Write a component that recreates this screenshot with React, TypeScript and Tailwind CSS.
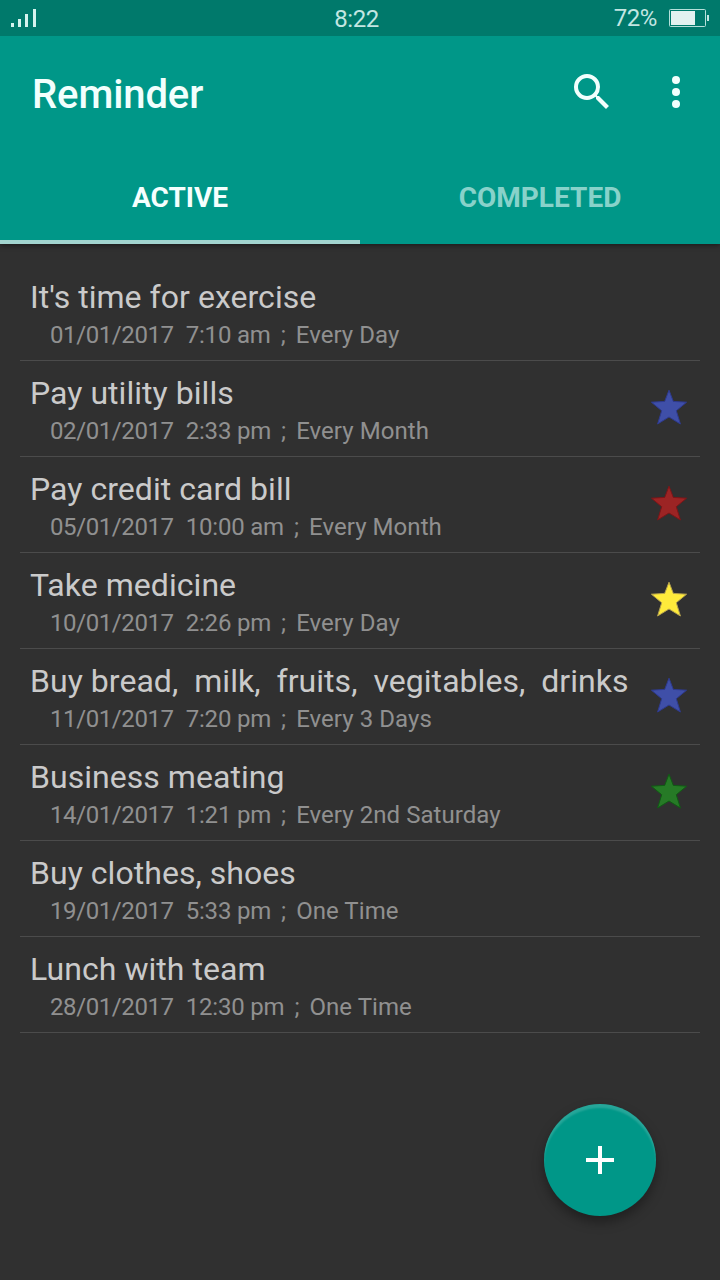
import React from 'react';

type Reminder = {
  title: string;
  date: string;
  time: string;
  repeat: string;
  star?: string;
};

const reminders: Reminder[] = [
  { title: "It's time for exercise", date: '01/01/2017', time: '7:10 am', repeat: 'Every Day' },
  { title: 'Pay utility bills', date: '02/01/2017', time: '2:33 pm', repeat: 'Every Month', star: 'fill-[#3f4fa8] stroke-[#2e3a90]' },
  { title: 'Pay credit card bill', date: '05/01/2017', time: '10:00 am', repeat: 'Every Month', star: 'fill-[#9c2424] stroke-[#7d1518]' },
  { title: 'Take medicine', date: '10/01/2017', time: '2:26 pm', repeat: 'Every Day', star: 'fill-[#ffeb3b] stroke-[#b5a24e]' },
  { title: 'Buy bread,  milk,  fruits,  vegitables,  drinks', date: '11/01/2017', time: '7:20 pm', repeat: 'Every 3 Days', star: 'fill-[#3f4fa8] stroke-[#2e3a90]' },
  { title: 'Business meating', date: '14/01/2017', time: '1:21 pm', repeat: 'Every 2nd Saturday', star: 'fill-[#267a26] stroke-[#105c14]' },
  { title: 'Buy clothes, shoes', date: '19/01/2017', time: '5:33 pm', repeat: 'One Time' },
  { title: 'Lunch with team', date: '28/01/2017', time: '12:30 pm', repeat: 'One Time' },
];

const StatusBar: React.FC = () => (
  <div className="grid h-9 grid-cols-3 items-center bg-[#00796b] text-2xl tracking-[-0.4px] text-[#c3e6e2]">
    <svg width="26" height="18" viewBox="0 0 26 18" className="ml-[11px] fill-[#d5f3ee]">
      <rect x="0" y="14" width="3" height="4" />
      <rect x="7" y="10" width="3" height="8" />
      <rect x="14" y="5" width="3" height="13" />
      <rect x="22" y="0" width="3" height="18" />
    </svg>
    <span className="pr-[7px] pt-[2px] text-center leading-8">8:22</span>
    <div className="flex items-center justify-end pr-[11px]">
      <span className="leading-8">72%</span>
      <svg width="40" height="18" viewBox="0 0 40 18" className="ml-3">
        <rect x="0.5" y="0.5" width="36" height="17" rx="1" className="fill-none stroke-[#b5e0da]" />
        <rect x="2" y="2" width="24" height="14" className="fill-[#e3f2f0]" />
        <rect x="38" y="6" width="2" height="6" className="fill-[#c3e6e2]" />
      </svg>
    </div>
  </div>
);

const StarIcon: React.FC<{ className: string }> = ({ className }) => (
  <svg width="36" height="36" viewBox="0 0 36 36" className={className} strokeWidth="1">
    <path d="M18 1.2L22.3 12.4L35.6 13.2L25.3 21.7L29.4 35L18 28L6.6 35L10.7 21.7L0.4 13.2L13.7 12.4Z" />
  </svg>
);

const App: React.FC = () => {
  return (
    <div className="relative flex h-[1280px] w-[720px] flex-col overflow-hidden bg-[#303030] font-[Roboto,sans-serif]">
      {/* Header */}
      <header className="bg-[#009788] shadow-[0_1px_5px_rgba(0,0,0,0.5)]">
        <StatusBar />
        <div className="flex h-28 items-center pl-8 pr-5">
          <h1 className="flex-1 pt-[6px] text-[40px] font-medium leading-[48px] tracking-[-0.1px] text-[#f2fffd]">Reminder</h1>
          <svg width="48" height="48" viewBox="0 0 24 24" className="mr-9 fill-[#f2fffd]">
            <path d="M15.5 14h-.79l-.28-.27A6.471 6.471 0 0 0 16 9.5 6.5 6.5 0 1 0 9.5 16c1.61 0 3.09-.59 4.23-1.57l.27.28v.79l5 4.99L20.49 19l-4.99-5zm-6 0C7.01 14 5 11.99 5 9.5S7.01 5 9.5 5 14 7.01 14 9.5 11.99 14 9.5 14z" />
          </svg>
          <svg width="48" height="48" viewBox="0 0 24 24" className="fill-[#f2fffd]">
            <circle cx="12" cy="6" r="2" />
            <circle cx="12" cy="12" r="2" />
            <circle cx="12" cy="18" r="2" />
          </svg>
        </div>
        <div className="grid h-24 grid-cols-2 text-center text-[28px] font-bold leading-8">
          <button className="border-b-4 border-[#a3d5d0] pt-2 text-[#f5fffe]">ACTIVE</button>
          <button className="border-b-4 border-transparent pt-2 text-[#88d2ca]">COMPLETED</button>
        </div>
      </header>

      {/* Reminder list */}
      <ul className="mx-5 mt-[21px]">
        {reminders.map((item) => (
          <li key={item.title} className="flex h-24 border-b border-[#4b4b4b] pl-[10px] pr-[13px]">
            <div className="flex-1 whitespace-pre pt-3">
              <div className="text-[32px] leading-10 tracking-[0.04px] text-[#cacaca]">{item.title}</div>
              <div className="mt-[2px] flex pl-5 text-2xl leading-8 text-[#909090]">
                <span className="mr-3 tracking-[-0.4px]">{item.date}</span>
                <span className="mr-[10px] tracking-[-0.2px]">{item.time}</span>
                <span className="mr-[10px]">;</span>
                <span className="tracking-[0.06px]">{item.repeat}</span>
              </div>
            </div>
            {item.star && (
              <div className="pt-7">
                <StarIcon className={item.star} />
              </div>
            )}
          </li>
        ))}
      </ul>

      {/* Floating add button */}
      <button className="absolute bottom-16 right-16 flex size-28 items-center justify-center rounded-full bg-[#009788] shadow-[0_6px_12px_rgba(0,0,0,0.35),inset_0_4px_2px_rgba(255,255,255,0.15)]">
        <svg width="48" height="48" viewBox="0 0 24 24" className="fill-white">
          <path d="M19 13h-6v6h-2v-6H5v-2h6V5h2v6h6z" />
        </svg>
      </button>
    </div>
  );
};

export default App;
